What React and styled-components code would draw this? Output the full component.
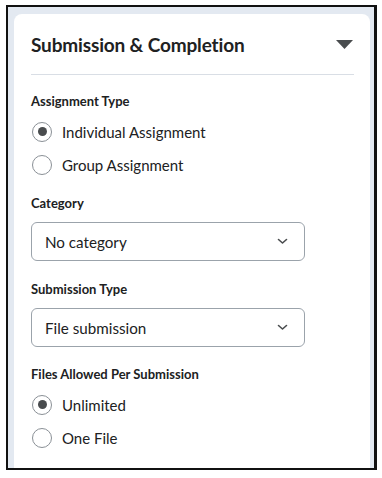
import React from "react";
import styled, { createGlobalStyle } from "styled-components";

const GlobalStyle = createGlobalStyle`
  html, body {
    margin: 0;
    padding: 0;
    background: #ffffff;
  }
  body {
    font-family: Lato, "Noto Sans", sans-serif;
    color: #202122;
  }
`;

const Frame = styled.div`
  margin: 5px 0 0 6px;
  width: 371px;
  height: 465px;
  box-sizing: border-box;
  border: 2px solid #111;
  border-right-width: 3px;
  background: #e3e9f1;
  padding: 7px 4px 0 6px;
  overflow: hidden;
`;

const Card = styled.div`
  background: #ffffff;
  border-radius: 8px 8px 0 0;
  height: 100%;
  padding: 0 16px 0 17px;
  box-sizing: border-box;
`;

const Header = styled.div`
  display: flex;
  align-items: center;
  justify-content: space-between;
  height: 61px;
  border-bottom: 1px solid #d9dee5;
  padding-top: 1px;
  box-sizing: border-box;
`;

const Title = styled.h2`
  margin: 0;
  font-size: 19px;
  font-weight: 700;
  letter-spacing: -0.15px;
`;

const Caret = styled.svg`
  width: 17px;
  height: 9px;
  margin-right: 1px;
`;

const Section = styled.div`
  display: flex;
  flex-direction: column;
  padding-top: ${(p) => p.$top}px;
`;

const Label = styled.div`
  font-size: 13px;
  font-weight: 700;
  line-height: 16px;
  margin-bottom: ${(p) => p.$gap}px;
`;

const RadioRow = styled.label`
  display: flex;
  align-items: center;
  gap: 10px;
  height: 33px;
  font-size: 15px;
`;

const RadioCircle = styled.span`
  width: 20px;
  height: 20px;
  border-radius: 50%;
  border: 1px solid #8a9096;
  box-sizing: border-box;
  display: flex;
  align-items: center;
  justify-content: center;
  flex-shrink: 0;
  background: #fff;
  margin-left: 1px;

  &::after {
    content: "";
    width: 9px;
    height: 9px;
    border-radius: 50%;
    background: ${(p) => (p.$checked ? "#494c4e" : "transparent")};
  }
`;

const Select = styled.div`
  width: 274px;
  height: 39px;
  box-sizing: border-box;
  border: 1px solid #9ba3ab;
  border-radius: 6px;
  display: flex;
  align-items: center;
  justify-content: space-between;
  padding: 0 16px 0 13px;
  font-size: 15.2px;
`;

const Chevron = styled.svg`
  width: 11px;
  height: 7px;
`;

const Radio = ({ checked, children }) => (
  <RadioRow>
    <RadioCircle $checked={checked} />
    {children}
  </RadioRow>
);

const Dropdown = ({ value }) => (
  <Select>
    <span>{value}</span>
    <Chevron viewBox="0 0 11 7">
      <path d="M1.5 1.5 L5.5 5 L9.5 1.5" fill="none" stroke="#494c4e" strokeWidth="1.6" strokeLinecap="round" strokeLinejoin="round" />
    </Chevron>
  </Select>
);

export default function App() {
  return (
    <>
      <GlobalStyle />
      <Frame>
        <Card>
          <Header>
            <Title>Submission &amp; Completion</Title>
            <Caret viewBox="0 0 17 9">
              <path d="M0 0 H17 L8.5 9 Z" fill="#494c4e" />
            </Caret>
          </Header>

          <Section $top={18}>
            <Label $gap={6}>Assignment Type</Label>
            <Radio checked>Individual Assignment</Radio>
            <Radio>Group Assignment</Radio>
          </Section>

          <Section $top={14}>
            <Label $gap={11}>Category</Label>
            <Dropdown value="No category" />
          </Section>

          <Section $top={20}>
            <Label $gap={11}>Submission Type</Label>
            <Dropdown value="File submission" />
          </Section>

          <Section $top={19}>
            <Label $gap={6}>Files Allowed Per Submission</Label>
            <Radio checked>Unlimited</Radio>
            <Radio>One File</Radio>
          </Section>
        </Card>
      </Frame>
    </>
  );
}
